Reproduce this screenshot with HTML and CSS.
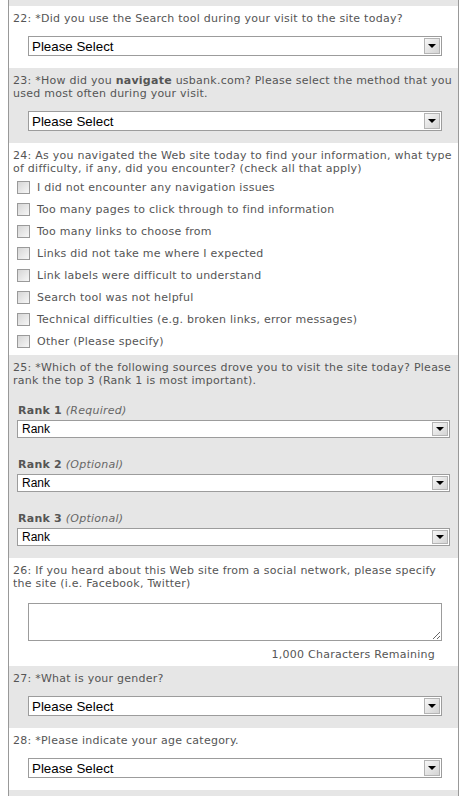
FILE: index.html
```html
<!DOCTYPE html>
<html lang="en">

<head>
    <meta charset="UTF-8">
    <meta name="viewport" content="width=device-width, initial-scale=1.0">
    <title>Site Survey</title>
    <link rel="stylesheet" href="styles.css">
</head>

<body>
    <div class="survey">
        <!-- tail of the previous question -->
        <div class="q alt tail"></div>

        <div class="q">
            <p class="qtext">22: *Did you use the Search tool during your visit to the site today?</p>
            <div class="dd">
                <select><option>Please Select</option></select>
                <span class="dd-btn"></span>
            </div>
        </div>

        <div class="q alt">
            <p class="qtext">23: *How did you <b>navigate</b> usbank.com? Please select the method that you used most often during your visit.</p>
            <div class="dd">
                <select><option>Please Select</option></select>
                <span class="dd-btn"></span>
            </div>
        </div>

        <div class="q checkq">
            <p class="qtext">24: As you navigated the Web site today to find your information, what type of difficulty, if any, did you encounter? (check all that apply)</p>
            <ul class="checks">
                <li><label><input type="checkbox"> I did not encounter any navigation issues</label></li>
                <li><label><input type="checkbox"> Too many pages to click through to find information</label></li>
                <li><label><input type="checkbox"> Too many links to choose from</label></li>
                <li><label><input type="checkbox"> Links did not take me where I expected</label></li>
                <li><label><input type="checkbox"> Link labels were difficult to understand</label></li>
                <li><label><input type="checkbox"> Search tool was not helpful</label></li>
                <li><label><input type="checkbox"> Technical difficulties (e.g. broken links, error messages)</label></li>
                <li><label><input type="checkbox"> Other (Please specify)</label></li>
            </ul>
        </div>

        <div class="q alt">
            <p class="qtext">25: *Which of the following sources drove you to visit the site today? Please rank the top 3 (Rank 1 is most important).</p>
            <div class="ranks">
                <div class="rank">
                    <div class="rank-label"><b>Rank 1</b> <i>(Required)</i></div>
                    <div class="dd small">
                        <select><option>Rank</option></select>
                        <span class="dd-btn"></span>
                    </div>
                </div>
                <div class="rank">
                    <div class="rank-label"><b>Rank 2</b> <i>(Optional)</i></div>
                    <div class="dd small">
                        <select><option>Rank</option></select>
                        <span class="dd-btn"></span>
                    </div>
                </div>
                <div class="rank">
                    <div class="rank-label"><b>Rank 3</b> <i>(Optional)</i></div>
                    <div class="dd small">
                        <select><option>Rank</option></select>
                        <span class="dd-btn"></span>
                    </div>
                </div>
            </div>
        </div>

        <div class="q textq">
            <p class="qtext">26: If you heard about this Web site from a social network, please specify the site (i.e. Facebook, Twitter)</p>
            <textarea class="answer"></textarea>
            <div class="remaining">1,000 Characters Remaining</div>
        </div>

        <div class="q alt">
            <p class="qtext">27: *What is your gender?</p>
            <div class="dd">
                <select><option>Please Select</option></select>
                <span class="dd-btn"></span>
            </div>
        </div>

        <div class="q">
            <p class="qtext">28: *Please indicate your age category.</p>
            <div class="dd">
                <select><option>Please Select</option></select>
                <span class="dd-btn"></span>
            </div>
        </div>

        <div class="q alt tail-end"></div>
    </div>
</body>

</html>
```

FILE: styles.css
```css
body {
    margin: 0;
    background: #fff;
    font-family: "DejaVu Sans", Verdana, sans-serif;
    font-size: 11px;
    letter-spacing: 0.25px;
    color: #555;
}

.survey {
    width: 449px;
    margin-left: 8px;
    border-left: 1px solid #999;
    border-right: 1px solid #999;
}

.q {
    padding: 6px 4px 12px;
    background: #fff;
}

.q.alt {
    background: #e6e6e6;
}

.tail {
    height: 6px;
    padding: 0;
}

.tail-end {
    height: 20px;
    padding: 0;
}

.qtext {
    margin: 0;
    line-height: 13px;
}

/* drop-down lists */
.dd {
    position: relative;
    width: 414px;
    height: 20px;
    margin: 11px 0 0 15px;
}

.dd select {
    appearance: none;
    -webkit-appearance: none;
    display: block;
    width: 100%;
    height: 100%;
    margin: 0;
    padding: 0 3px;
    border: 1px solid #9c9c9c;
    border-radius: 0;
    background: #fff;
    color: #000;
    font-family: "Liberation Sans", Arial, sans-serif;
    font-size: 13.33px;
    letter-spacing: 0;
}

.dd.small {
    width: 433px;
    height: 18px;
    margin: 3px 0 0;
}

.dd.small select {
    font-size: 12px;
    padding-left: 4px;
}

.dd-btn {
    position: absolute;
    top: 2px;
    bottom: 2px;
    right: 2px;
    width: 16px;
    box-sizing: border-box;
    border: 1px solid #b4b4b4;
    background: linear-gradient(135deg, #f6f6f6, #d4d4d4);
    pointer-events: none;
}

.dd-btn::after {
    content: "";
    position: absolute;
    left: 50%;
    top: 50%;
    margin: -2px 0 0 -4px;
    border-left: 4px solid transparent;
    border-right: 4px solid transparent;
    border-top: 4px solid #000;
}

/* checkbox list */
.checkq {
    padding-bottom: 3px;
}

.checks {
    list-style: none;
    margin: 1px 0 0;
    padding: 0 0 0 4px;
}

.checks li {
    height: 22px;
    display: flex;
    align-items: center;
}

.checks label {
    display: flex;
    align-items: center;
    gap: 4px;
}

.checks input {
    appearance: none;
    -webkit-appearance: none;
    width: 13px;
    height: 13px;
    margin: 0 3px 0 0;
    border: 1px solid #9a9a9a;
    background: linear-gradient(135deg, #d6d6d6, #f7f7f7);
}

/* ranking */
.ranks {
    margin-top: 17px;
    padding-left: 4px;
}

.rank + .rank {
    margin-top: 20px;
}

.rank-label {
    line-height: 13px;
    padding-left: 1px;
}

.rank-label i {
    color: #666;
}

/* open text */
.textq {
    padding-bottom: 5px;
}

.answer {
    display: block;
    box-sizing: border-box;
    width: 414px;
    height: 38px;
    margin: 13px 0 0 15px;
    border: 1px solid #9c9c9c;
    border-radius: 0;
    background: #fff;
}

.remaining {
    margin-top: 7px;
    padding-right: 19px;
    text-align: right;
    line-height: 13px;
}
```
